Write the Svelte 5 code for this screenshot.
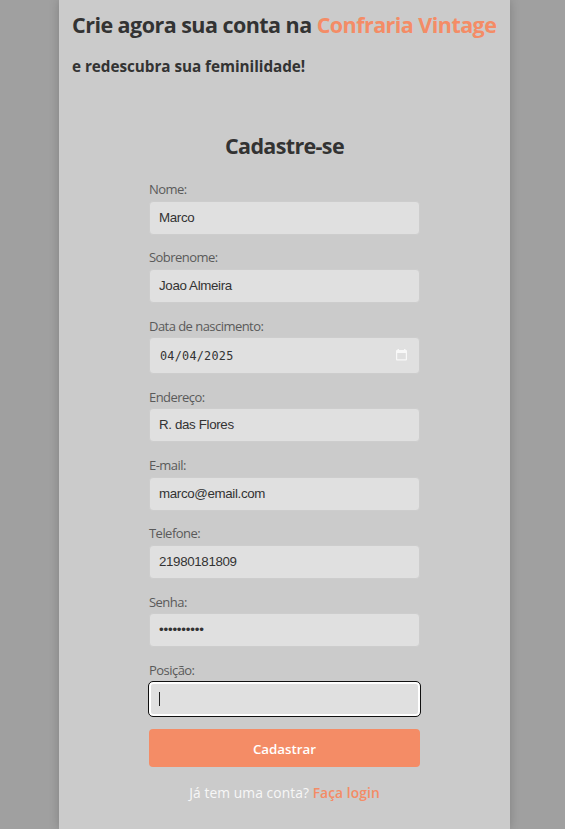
<script>
  let fields = $state([
    { id: 'nome', label: 'Nome:', type: 'text', value: 'Marco' },
    { id: 'sobrenome', label: 'Sobrenome:', type: 'text', value: 'Joao Almeira' },
    { id: 'nascimento', label: 'Data de nascimento:', type: 'date', value: '04/04/2025' },
    { id: 'endereco', label: 'Endereço:', type: 'text', value: 'R. das Flores' },
    { id: 'email', label: 'E-mail:', type: 'email', value: 'marco@email.com' },
    { id: 'telefone', label: 'Telefone:', type: 'tel', value: '21980181809' },
    { id: 'senha', label: 'Senha:', type: 'password', value: '1234567890' },
    { id: 'posicao', label: 'Posição:', type: 'text', value: '', active: true }
  ]);
</script>

<div class="page">
  <main class="panel">
    <header>
      <h1>Crie agora sua conta na <span class="brand">Confraria Vintage</span></h1>
      <h3>e redescubra sua feminilidade!</h3>
    </header>
    <form onsubmit={(e) => e.preventDefault()}>
      <h2>Cadastre-se</h2>
      {#each fields as field (field.id)}
        <div class="field">
          <label for={field.id}>{field.label}</label>
          <div class="control" class:date={field.type === 'date'} class:active={field.active}>
            <input
              id={field.id}
              type={field.type === 'date' ? 'text' : field.type}
              class:password={field.type === 'password'}
              bind:value={field.value}
            />
            {#if field.type === 'date'}
              <svg class="calendar" viewBox="0 0 11 12" aria-hidden="true">
                <path fill="#f8f8f8" fill-rule="evenodd" d="M1.5 0H3v1h5V0h1.500v1H10a1 1 0 0 1 1 1v8.500a1 1 0 0 1-1 1H1a1 1 0 0 1-1-1V2a1 1 0 0 1 1-1h.5zM1.200 4v6.300h8.600V4z" />
              </svg>
            {/if}
            {#if field.active}<i class="caret"></i>{/if}
          </div>
        </div>
      {/each}
      <button type="submit">Cadastrar</button>
      <p>Já tem uma conta? <a href="#login">Faça login</a></p>
    </form>
  </main>
</div>

<style>
  :global(body) { margin: 0; overflow: hidden; }
  .page {
    height: 829px;
    display: flex;
    justify-content: center;
    background: #a0a0a0;
    font-family: "Open Sans", "Noto Sans", sans-serif;
    color: #333;
    overflow: hidden;
  }
  .panel {
    width: 451px;
    flex: none;
    margin-left: 4px;
    box-sizing: border-box;
    background: #cbcbcb;
    box-shadow: 0 0 10px rgba(0, 0, 0, .2);
  }
  header { padding: 9px 0 0 13px; height: 120px; box-sizing: border-box; white-space: nowrap; }
  h1, h2, h3, p { margin: 0; }
  h1 { font-size: 21.5px; line-height: 32px; letter-spacing: -.54px; }
  .brand { color: #f48c66; }
  h3 { font-size: 15.3px; line-height: 22px; margin-top: 14px; letter-spacing: -.05px; }
  form { width: 271px; margin: 0 auto; display: flex; flex-direction: column; }
  h2 { font-size: 21.5px; line-height: 32px; margin: 10px 0 17.7px; text-align: center; letter-spacing: -.65px; }
  .field { margin-bottom: 13.33px; }
  label { display: block; height: 21px; box-sizing: border-box; padding-top: .4px; font-size: 13px; line-height: 18px; color: #5a5a5a; letter-spacing: -.54px; }
  .control {
    position: relative;
    height: 34px;
    box-sizing: border-box;
    display: flex;
    align-items: center;
    padding: 0 10px;
    border: 1px solid #cdcdcd;
    border-radius: 4px;
    background: #e0e0e0;
  }
  .control.date { height: 36.67px; }
  .control.active { border: 2px solid #fff; outline: 1px solid #101010; padding: 0 9px; }
  input {
    width: 100%;
    min-width: 0;
    margin: 0 0 0 -1px;
    padding: 0;
    border: 0;
    outline: 0;
    background: transparent;
    color: #333;
    font: 13.333px/16px "Liberation Sans", Arial, sans-serif;
    letter-spacing: -.35px;
  }
  .date input { font: 11.8px/16px "DejaVu Sans Mono", monospace; letter-spacing: .25px; margin-left: 0; padding-top: 1px; }
  input.password { letter-spacing: -.2px; }
  .calendar { width: 11px; height: 12px; flex: none; margin: 0 2px 1px 0; }
  .caret { position: absolute; left: 8px; top: 8px; width: 1px; height: 14px; background: #222; }
  button {
    height: 38px;
    border: 0;
    border-radius: 4px;
    background: #f48c66;
    color: #fff;
    font: 600 13.333px/20px "Open Sans", "Noto Sans", sans-serif;
    padding: 2px 0 0;
  }
  p { margin-top: 16px; text-align: center; font-size: 13.8px; line-height: 20px; letter-spacing: .08px; color: #f7f7f7; white-space: nowrap; }
  a { color: #f48c66; font-weight: 600; text-decoration: none; }
</style>
